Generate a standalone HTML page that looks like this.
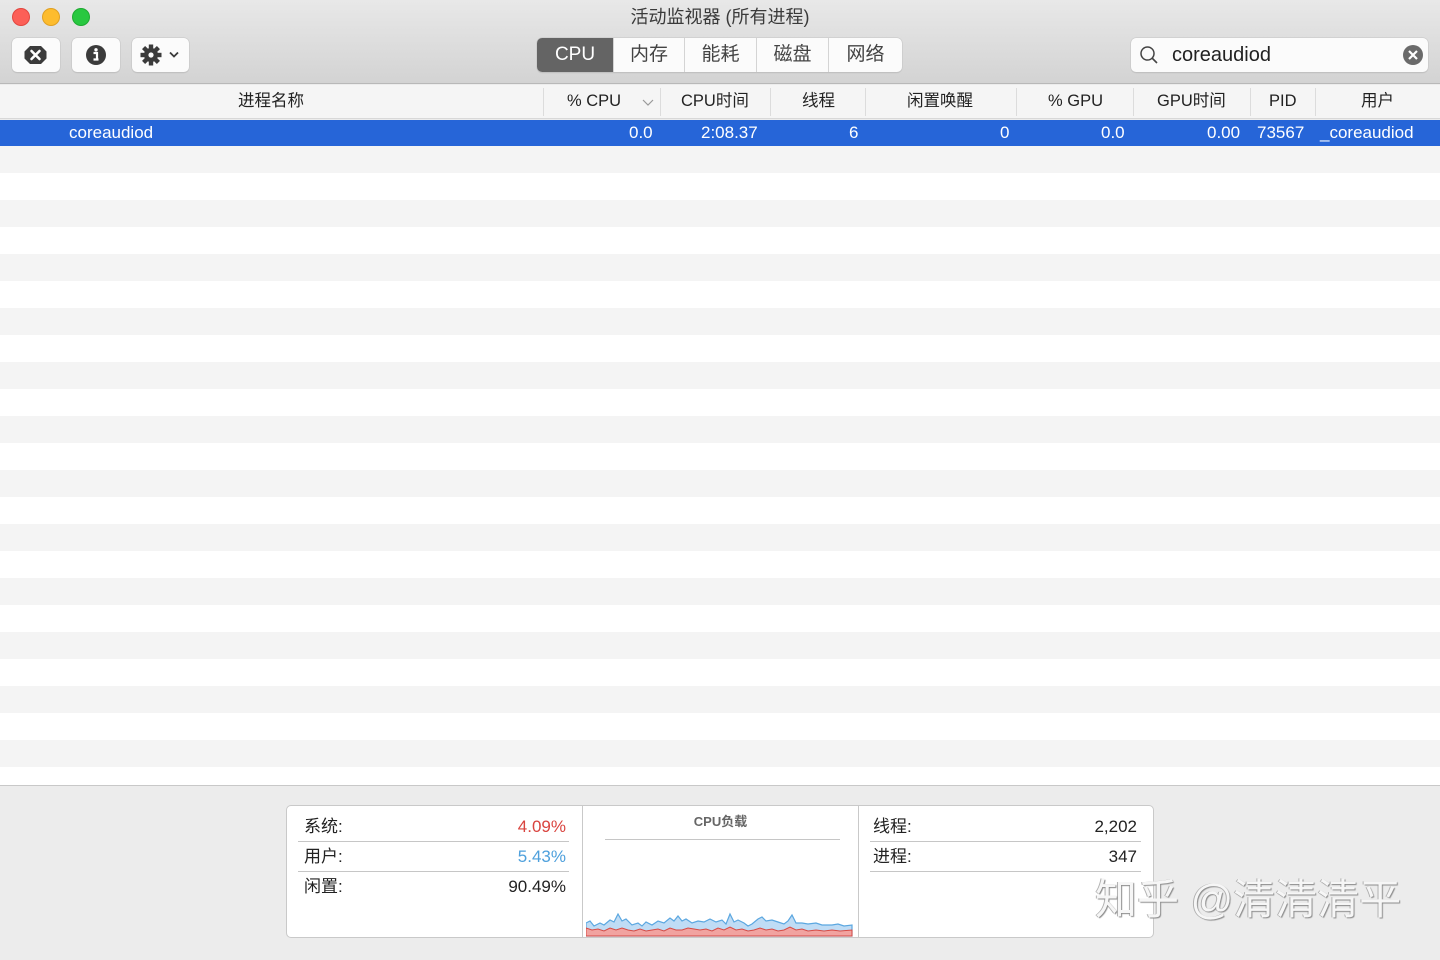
<!DOCTYPE html>
<html><head><meta charset="utf-8"><style>
*{margin:0;padding:0;box-sizing:border-box}
body{width:1440px;height:960px;overflow:hidden;background:#ececec;font-family:"Liberation Sans","Noto Sans CJK SC",sans-serif;color:#222;position:relative}
.abs{position:absolute}
.tb{position:absolute;left:0;top:0;width:1440px;height:84px;background:linear-gradient(#e8e8e8,#d3d3d3);border-bottom:1px solid #b8b8b8}
.dot{position:absolute;top:8px;width:18px;height:18px;border-radius:50%}
.btn{position:absolute;top:38px;height:34px;background:#fbfbfb;border-radius:5px;box-shadow:0 0 0 0.5px #c4c4c4,0 1px 1px rgba(0,0,0,.15)}
.seg{position:absolute;left:537px;top:38px;height:34px;width:365px;display:flex;border-radius:5px;background:#fbfbfb;box-shadow:0 0 0 0.5px #c4c4c4,0 1px 1px rgba(0,0,0,.15);overflow:hidden}
.seg div{height:34px;line-height:34px;text-align:center;font-size:19px;color:#444;border-left:1px solid #d4d4d4}
.hdr{position:absolute;left:0;top:85px;width:1440px;height:34px;background:#f5f5f5;border-bottom:1px solid #d8d8d8;font-size:16.5px}
.hdr span{position:absolute;top:0;height:32px;line-height:32px}
.sep{position:absolute;top:3px;width:1px;height:28px;background:#dcdcdc}
.sel{position:absolute;left:0;top:120px;width:1440px;height:26px;background:#2665d8;color:#fff;font-size:17px}
.sel span{position:absolute;top:0;line-height:26px}
.rows{position:absolute;left:0;top:146px;width:1440px;height:639px;background:repeating-linear-gradient(#f4f4f4 0,#f4f4f4 27px,#fff 27px,#fff 54px)}
.panel{position:absolute;left:286px;top:805px;width:868px;height:133px;background:#fff;border:1px solid #c9c9c9;border-radius:5px}
.lbl{position:absolute;font-size:17px;height:24px;line-height:24px}
.ln{position:absolute;height:1px;background:#c6c6c6}
</style></head><body>
<div class="tb">
<div class="dot" style="left:12px;background:#fc5f57;border:1px solid #e2463f"></div>
<div class="dot" style="left:42px;background:#fdbc2e;border:1px solid #e0a023"></div>
<div class="dot" style="left:72px;background:#28c840;border:1px solid #1eaa31"></div>
<div class="abs" style="left:0;width:1440px;top:4px;line-height:26px;text-align:center;font-size:18px;color:#3a3a3a">活动监视器 (所有进程)</div>
<div class="btn" style="left:12px;width:48px"><svg width="48" height="34"><polygon points="18.5,9 29.5,9 35,14.5 35,21.5 29.5,27 18.5,27 13,21.5 13,14.5" fill="#3b3b3b" transform="translate(-0.5,-1)"/><path d="M19.5 13 l8 8 M27.5 13 l-8 8" stroke="#fff" stroke-width="2.6" stroke-linecap="round"/></svg></div>
<div class="btn" style="left:72px;width:48px"><svg width="48" height="34"><circle cx="24" cy="17" r="10" fill="#3b3b3b"/><circle cx="24" cy="11.8" r="1.7" fill="#fff"/><path d="M21.5 15h3.5v6.5M21.5 21.5h5" stroke="#fff" stroke-width="2.2" fill="none"/></svg></div>
<div class="btn" style="left:132px;width:57px"><svg width="57" height="34"><g transform="translate(19,17)" fill="#3b3b3b"><circle r="7"/><g id="t"><rect x="-2.2" y="-10.5" width="4.4" height="5"/></g><use href="#t" transform="rotate(45)"/><use href="#t" transform="rotate(90)"/><use href="#t" transform="rotate(135)"/><use href="#t" transform="rotate(180)"/><use href="#t" transform="rotate(225)"/><use href="#t" transform="rotate(270)"/><use href="#t" transform="rotate(315)"/><circle r="2.6" fill="#fbfbfb"/></g><path d="M38 14.5l4 4 4-4" stroke="#3b3b3b" stroke-width="1.8" fill="none"/></svg></div>
<div class="seg"><div style="width:76px;background:#646464;color:#fff;border-left:none">CPU</div><div style="width:71px">内存</div><div style="width:72px">能耗</div><div style="width:72px">磁盘</div><div style="width:74px">网络</div></div>
<div class="btn" style="left:1131px;width:297px;top:38px"><svg width="297" height="34"><circle cx="16.5" cy="15.5" r="6.5" stroke="#444" stroke-width="1.5" fill="none"/><path d="M21 20l5 5" stroke="#444" stroke-width="1.6"/><circle cx="282" cy="17" r="10" fill="#6a6a6a"/><path d="M278 13l8 8M286 13l-8 8" stroke="#fff" stroke-width="2.2"/></svg><span class="abs" style="left:41px;top:0;line-height:34px;font-size:20px;color:#222">coreaudiod</span></div>
</div>
<div class="hdr">
<span style="left:238px">进程名称</span>
<div class="sep" style="left:543px"></div><span style="left:567px">% CPU</span><svg class="abs" style="left:642px;top:12px" width="12" height="10"><path d="M1 3l5 5 5-5" stroke="#999" stroke-width="1.2" fill="none"/></svg>
<div class="sep" style="left:660px"></div><span style="left:681px">CPU时间</span>
<div class="sep" style="left:770px"></div><span style="left:802px">线程</span>
<div class="sep" style="left:865px"></div><span style="left:907px">闲置唤醒</span>
<div class="sep" style="left:1016px"></div><span style="left:1048px">% GPU</span>
<div class="sep" style="left:1133px"></div><span style="left:1157px">GPU时间</span>
<div class="sep" style="left:1250px"></div><span style="left:1269px">PID</span>
<div class="sep" style="left:1315px"></div><span style="left:1361px">用户</span>
</div>
<div class="sel">
<span style="left:69px">coreaudiod</span>
<span style="left:629px">0.0</span><span style="left:701px">2:08.37</span><span style="left:849px">6</span><span style="left:1000px">0</span><span style="left:1101px">0.0</span><span style="left:1207px">0.00</span><span style="left:1257px">73567</span><span style="left:1320px">_coreaudiod</span>
</div>
<div class="rows"></div>
<div class="abs" style="left:0;top:785px;width:1440px;height:1px;background:#c8c8c8"></div>
<div class="panel">
<div class="lbl" style="left:17px;top:9px">系统:</div><div class="lbl" style="right:587px;top:9px;color:#d9443f">4.09%</div>
<div class="ln" style="left:11px;width:271px;top:35px"></div>
<div class="lbl" style="left:17px;top:39px">用户:</div><div class="lbl" style="right:587px;top:39px;color:#4ea0dc">5.43%</div>
<div class="ln" style="left:11px;width:271px;top:65px"></div>
<div class="lbl" style="left:17px;top:69px">闲置:</div><div class="lbl" style="right:587px;top:69px">90.49%</div>
<div class="abs" style="left:295px;top:0;width:1px;height:131px;background:#c9c9c9"></div>
<div class="abs" style="left:571px;top:0;width:1px;height:131px;background:#c9c9c9"></div>
<div class="abs" style="left:296px;width:275px;top:5px;line-height:22px;text-align:center;font-size:13px;color:#666;font-weight:bold">CPU负载</div>
<div class="ln" style="left:318px;width:235px;top:33px"></div>
<svg class="abs" style="left:299px;top:103px" width="268" height="28"><path d="M0 14L4 12 8 17 14 14 18 16 24 11 28 13 32 5 36 12 40 10 46 16 52 14 56 17 60 13 66 16 72 12 78 14 84 9 88 12 92 7 96 12 100 10 106 14 112 12 118 13 124 10 130 13 136 11 140 15 144 5 148 13 152 11 158 14 162 17 166 15 172 10 176 8 180 12 186 11 192 13 198 15 202 12 206 6 210 14 216 14 222 15 230 14 236 16 242 16 246 16 252 15 258 17 266 16 266 27 0 27Z" fill="#bfdcf5" stroke="#5ba7e0" stroke-width="1.2"/><path d="M0 19L6 21 12 20 18 22 24 19 30 21 36 19 42 21 48 22 54 20 60 22 66 21 72 20 78 22 84 19 90 21 96 21 102 19 108 20 114 21 120 20 126 22 132 19 138 21 144 18 150 21 156 20 162 22 168 21 174 19 180 21 186 20 192 22 198 21 204 18 210 21 216 20 222 22 230 21 238 22 246 21 254 22 266 21 266 27 0 27Z" fill="#f1a3a0" stroke="#d64a44" stroke-width="1"/></svg>
<div class="lbl" style="left:586px;top:9px">线程:</div><div class="lbl" style="right:16px;top:9px">2,202</div>
<div class="ln" style="left:583px;width:271px;top:35px"></div>
<div class="lbl" style="left:586px;top:39px">进程:</div><div class="lbl" style="right:16px;top:39px">347</div>
<div class="ln" style="left:583px;width:271px;top:65px"></div>
</div>
<div class="abs" style="left:1095px;top:872px;line-height:56px;font-size:42px;color:#f6f6f6;text-shadow:1px 1px 1px #8a8a8a,-1px 0 0 #b0b0b0;white-space:nowrap">知乎 @清清清平</div>
</body></html>
